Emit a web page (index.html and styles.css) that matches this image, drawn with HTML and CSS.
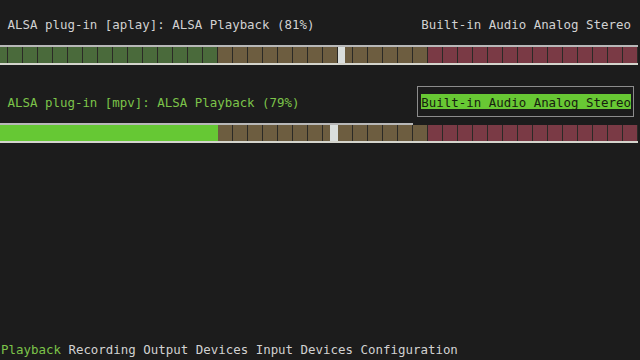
FILE: index.html
```html
<!DOCTYPE html>
<html>
<head>
<meta charset="utf-8">
<title>ncpamixer</title>
<link rel="stylesheet" href="styles.css">
</head>
<body>
<main class="streams">
  <section class="stream">
    <div class="stream-head">
      <span class="title">ALSA plug-in [aplay]: ALSA Playback (81%)</span>
      <span class="device-box"><span class="device-name">Built-in Audio Analog Stereo</span></span>
    </div>
    <div class="meter-wrap">
      <div class="rule"></div>
      <div class="meter">
        <div class="thumb" style="left: 337.5px"></div>
      </div>
    </div>
  </section>
  <section class="stream is-selected">
    <div class="stream-head">
      <span class="title">ALSA plug-in [mpv]: ALSA Playback (79%)</span>
      <span class="device-box"><span class="device-name">Built-in Audio Analog Stereo</span></span>
    </div>
    <div class="meter-wrap">
      <div class="rule"></div>
      <div class="meter">
        <div class="level" style="width: 217.5px"></div>
        <div class="thumb" style="left: 330px"></div>
      </div>
    </div>
  </section>
</main>
<footer class="tabs"><span class="tab is-active">Playback</span> <span class="tab">Recording</span> <span class="tab">Output Devices</span> <span class="tab">Input Devices</span> <span class="tab">Configuration</span></footer>
</body>
</html>
```
FILE: styles.css
```css
html, body {
  margin: 0;
  padding: 0;
}

body {
  width: 640px;
  height: 360px;
  overflow: hidden;
  background: #1c1c1c;
  color: #d2d2d2;
  font-family: "DejaVu Sans Mono", "Liberation Mono", monospace;
  font-size: 12.45px;
  display: flex;
  flex-direction: column;
}

.streams {
  display: flex;
  flex-direction: column;
  gap: 21px;
  padding-top: 8px;
}

.stream {
  display: flex;
  flex-direction: column;
  gap: 6px;
}

.stream-head {
  display: flex;
  justify-content: space-between;
  align-items: center;
  height: 31px;
  padding-left: 7.5px;
  padding-right: 6px;
}

.title {
  line-height: 15px;
  white-space: pre;
  padding-top: 2px;
}

.device-box {
  border: 1px solid transparent;
  padding: 7px 2px 7px 3px;
}

.device-name {
  display: block;
  line-height: 15px;
  white-space: pre;
  padding-top: 1px;
  height: 14px;
}

.is-selected .title {
  color: #7cc44a;
}

.is-selected .device-box {
  border-color: #8c8c8c;
}

.is-selected .device-name {
  background: #68c834;
  color: #17200f;
}

.meter-wrap {
  width: 637.5px;
}

.rule {
  height: 2px;
  background: #b8b8b8;
}

.is-selected .rule {
  width: 412.5px;
}

.is-selected .meter-wrap {
  margin-top: 0;
}

.meter {
  position: relative;
  height: 16px;
  border-bottom: 2px solid #d4d4cc;
  background:
    repeating-linear-gradient(90deg, transparent 0 7.5px, #2b2a26 7.5px 8.5px, transparent 8.5px 15px),
    linear-gradient(90deg, #4a6a3b 0 217.5px, #6d5d40 217.5px 427.5px, #7a3a45 427.5px);
}

.level {
  height: 100%;
  background: #66c834;
}

.thumb {
  position: absolute;
  top: 0;
  width: 7.5px;
  height: 100%;
  background: #dadedc;
}

.tabs {
  margin-top: auto;
  padding: 0 0 3px 1px;
  line-height: 15px;
  white-space: pre;
}

.tab.is-active {
  color: #7cc44a;
}
```
